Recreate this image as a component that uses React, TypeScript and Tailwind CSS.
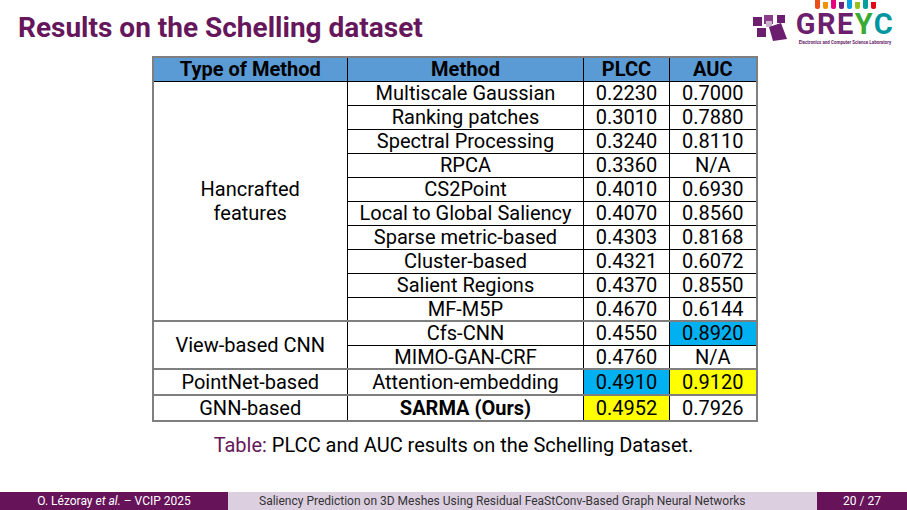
const rows: { type?: { label: string[]; span: number }; method: string; plcc: string; auc: string; bold?: boolean; plccBg?: string; aucBg?: string; sepTop?: boolean }[] = [
  { type: { label: ['Hancrafted', 'features'], span: 10 }, method: 'Multiscale Gaussian', plcc: '0.2230', auc: '0.7000' },
  { method: 'Ranking patches', plcc: '0.3010', auc: '0.7880' },
  { method: 'Spectral Processing', plcc: '0.3240', auc: '0.8110' },
  { method: 'RPCA', plcc: '0.3360', auc: 'N/A' },
  { method: 'CS2Point', plcc: '0.4010', auc: '0.6930' },
  { method: 'Local to Global Saliency', plcc: '0.4070', auc: '0.8560' },
  { method: 'Sparse metric-based', plcc: '0.4303', auc: '0.8168' },
  { method: 'Cluster-based', plcc: '0.4321', auc: '0.6072' },
  { method: 'Salient Regions', plcc: '0.4370', auc: '0.8550' },
  { method: 'MF-M5P', plcc: '0.4670', auc: '0.6144' },
  { type: { label: ['View-based CNN'], span: 2 }, method: 'Cfs-CNN', plcc: '0.4550', auc: '0.8920', aucBg: 'bg-[#00b0f0]', sepTop: true },
  { method: 'MIMO-GAN-CRF', plcc: '0.4760', auc: 'N/A' },
  { type: { label: ['PointNet-based'], span: 1 }, method: 'Attention-embedding', plcc: '0.4910', auc: '0.9120', plccBg: 'bg-[#00b0f0]', aucBg: 'bg-[#ffff00]', sepTop: true },
  { type: { label: ['GNN-based'], span: 1 }, method: 'SARMA (Ours)', plcc: '0.4952', auc: '0.7926', bold: true, plccBg: 'bg-[#ffff00]', sepTop: true },
];

function GreycLogo() {
  const bars = ['#e94e1b', '#f39200', '#e6007e', '#662483', '#009fe3', '#95c11f', '#00a19a', '#e30613'];
  return (
    <div className="flex items-start gap-[6px]">
      <svg width="36" height="28" viewBox="0 0 36 28" className="mt-[13px]">
        <rect x="0" y="4" width="9" height="9" fill="#6b1f6e" />
        <rect x="4" y="15" width="9" height="9" fill="#6b1f6e" />
        <rect x="11" y="2" width="9" height="9" fill="#8a3c8a" />
        <rect x="13" y="8" width="6" height="6" fill="#c9b4cc" />
        <polygon points="16,14 28,10 34,26 20,28" fill="#6b1f6e" />
        <rect x="24" y="2" width="8" height="8" fill="#6b1f6e" />
      </svg>
      <div className="flex w-[100px] flex-col items-center">
        <div className="flex h-[9px] items-end gap-[3px]">
          {bars.map((c, i) => (
            <div key={i} className="w-[5px] rounded-b-[2px]" style={{ backgroundColor: c, height: i % 2 ? 7 : 9 }} />
          ))}
        </div>
        <div className="mt-[1px] text-[29px] leading-[28px] font-bold tracking-[1.5px] whitespace-nowrap">
          <span className="text-[#6b1f6e]">GRE</span>
          <span className="text-[#3aaa35]">Y</span>
          <span className="text-[#0096a0]">C</span>
        </div>
        <div className="mt-[2px] text-[4.5px] leading-[6px] font-bold whitespace-nowrap text-[#6b1f6e]">
          Electronics and Computer Science Laboratory
        </div>
      </div>
    </div>
  );
}

export default function App() {
  const cell = 'border border-black px-[4px] text-center';
  return (
    <div className="flex h-[510px] w-[907px] flex-col bg-white font-['Roboto','Liberation_Sans',sans-serif] text-black">
      <div className="flex h-[50px] items-start justify-between pr-[12px]">
        <h1 className="pt-[11px] pl-[18px] text-[28px] leading-[34px] font-bold text-[#66165a]">
          Results on the Schelling dataset
        </h1>
        <GreycLogo />
      </div>

      <div className="mt-[6px] flex justify-center pl-[2px]">
        <table className="border-collapse border-2 border-[#7f7f7f] text-[20px] leading-none">
          <thead>
            <tr className="h-[24px] bg-[#5b9bd5] font-bold">
              <th className={`${cell} w-[195px]`}>Type of Method</th>
              <th className={`${cell} w-[236px]`}>Method</th>
              <th className={`${cell} w-[86px]`}>PLCC</th>
              <th className={`${cell} w-[87px]`}>AUC</th>
            </tr>
          </thead>
          <tbody>
            {rows.map((r, i) => (
              <tr key={i} className={`h-[24px] ${r.sepTop ? 'border-t-2 border-t-[#7f7f7f]' : ''}`}>
                {r.type && (
                  <td rowSpan={r.type.span} className={cell}>
                    {r.type.label.map(l => (
                      <div key={l} className="leading-[24px]">
                        {l}
                      </div>
                    ))}
                  </td>
                )}
                <td className={`${cell} ${r.bold ? 'font-bold' : ''}`}>{r.method}</td>
                <td className={`${cell} ${r.plccBg ?? ''}`}>{r.plcc}</td>
                <td className={`${cell} ${r.aucBg ?? ''}`}>{r.auc}</td>
              </tr>
            ))}
          </tbody>
        </table>
      </div>

      <div className="mt-[11px] text-center text-[20px] leading-[24px]">
        <span className="text-[#66165a]">Table:</span> PLCC and AUC results on the Schelling Dataset.
      </div>

      <div className="mt-auto flex h-[18px] text-[12px] leading-[18px]">
        <div className="flex w-[228px] items-center justify-center bg-[#66135a] text-white">
          O. Lézoray <span className="mx-[3px] italic">et al.</span>– VCIP 2025
        </div>
        <div className="flex flex-1 items-center bg-[#dccfe0] pl-[31px] text-[#333]">
          Saliency Prediction on 3D Meshes Using Residual FeaStConv-Based Graph Neural Networks
        </div>
        <div className="flex w-[90px] items-center justify-center bg-[#66135a] text-white">20 / 27</div>
      </div>
    </div>
  );
}
